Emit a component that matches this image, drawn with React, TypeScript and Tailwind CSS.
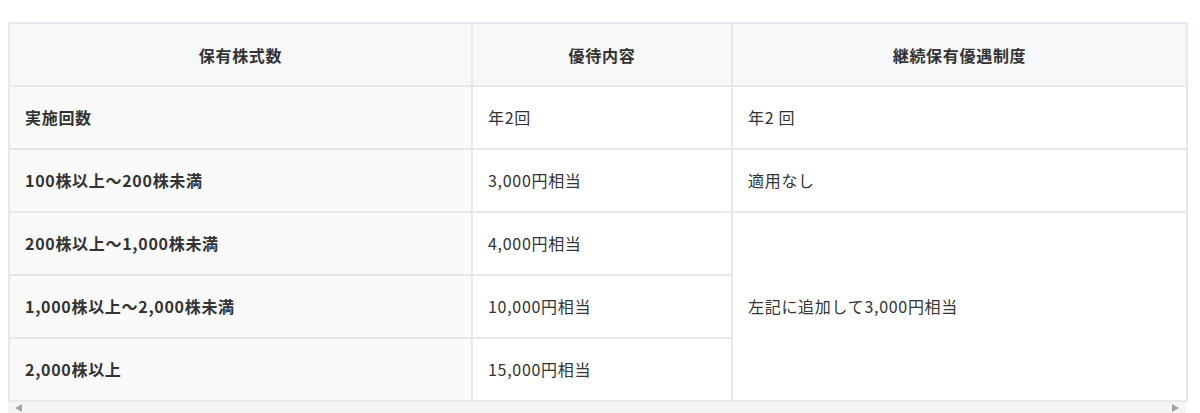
import React from "react";

const rows: { a: string; b: string; c?: string; span?: number }[] = [
  { a: "実施回数", b: "年2回", c: "年2 回" },
  { a: "100株以上～200株未満", b: "3,000円相当", c: "適用なし" },
  { a: "200株以上～1,000株未満", b: "4,000円相当", c: "左記に追加して3,000円相当", span: 3 },
  { a: "1,000株以上～2,000株未満", b: "10,000円相当" },
  { a: "2,000株以上", b: "15,000円相当" },
];

export default function App() {
  return (
    <div
      className="bg-white w-[1200px] h-[413px] overflow-hidden pt-[22px] pl-[8px] text-[#333]"
      style={{ fontFamily: '"Noto Sans CJK JP", "Noto Sans", sans-serif' }}
    >
      <div className="w-[1178px]">
        <table className="w-[1178px] border-collapse table-fixed text-[16px] leading-[24px] tracking-[0.7px]">
          <colgroup>
            <col className="w-[463px]" />
            <col className="w-[260px]" />
            <col className="w-[455px]" />
          </colgroup>
          <thead>
            <tr className="h-[63px] bg-[#f7f8fa]">
              <th className="border-2 border-[#e6e8ec] font-bold text-center">保有株式数</th>
              <th className="border-2 border-[#e6e8ec] font-bold text-center">優待内容</th>
              <th className="border-2 border-[#e6e8ec] font-bold text-center">継続保有優遇制度</th>
            </tr>
          </thead>
          <tbody>
            {rows.map((r, i) => (
              <tr key={i} className="h-[63px]">
                <td className="border-2 border-[#e6e8ec] bg-[#fafafa] font-bold px-[15px] pb-[1px]">{r.a}</td>
                <td className="border-2 border-[#e6e8ec] bg-white px-[15px] pb-[1px]">{r.b}</td>
                {r.c !== undefined && (
                  <td rowSpan={r.span ?? 1} className="border-2 border-[#e6e8ec] bg-white px-[15px] pb-[1px]">
                    {r.c}
                  </td>
                )}
              </tr>
            ))}
          </tbody>
        </table>
        <div className="h-[12px] bg-[#f5f5f5] flex items-center justify-between px-[7px]">
          <svg width="7" height="8" viewBox="0 0 7 8">
            <polygon points="7,0 7,8 0,4" fill="#a3a3a3" />
          </svg>
          <svg width="7" height="8" viewBox="0 0 7 8">
            <polygon points="0,0 0,8 7,4" fill="#a3a3a3" />
          </svg>
        </div>
      </div>
    </div>
  );
}
